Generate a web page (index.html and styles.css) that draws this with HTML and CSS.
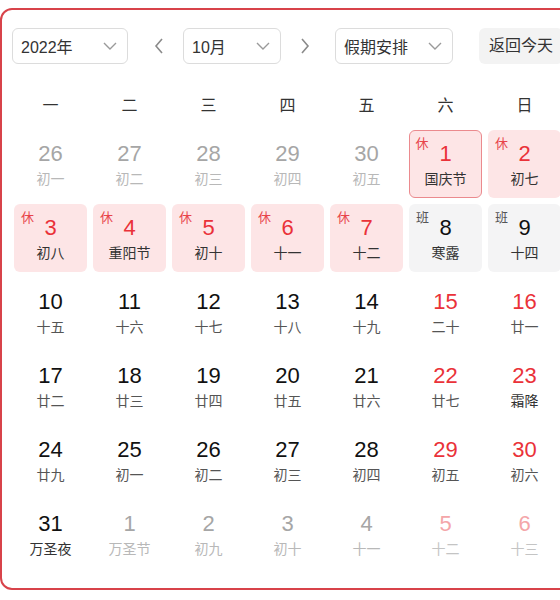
FILE: index.html
```html
<!DOCTYPE html>
<html lang="zh">
<head>
<meta charset="utf-8">
<link rel="stylesheet" href="styles.css">
</head>
<body>
<div class="cal">
  <div class="bar">
    <div class="sel sel-year"><span>2022年</span><svg class="dd" width="14" height="8" viewBox="0 0 14 8"><polyline points="1,1 7,7 13,1"/></svg></div>
    <span class="arrow arrow-l"><svg width="10" height="16" viewBox="0 0 10 16"><polyline points="8,1 2,8 8,15"/></svg></span>
    <div class="sel sel-month"><span>10月</span><svg class="dd" width="14" height="8" viewBox="0 0 14 8"><polyline points="1,1 7,7 13,1"/></svg></div>
    <span class="arrow arrow-r"><svg width="10" height="16" viewBox="0 0 10 16"><polyline points="2,1 8,8 2,15"/></svg></span>
    <div class="sel sel-hol"><span>假期安排</span><svg class="dd" width="14" height="8" viewBox="0 0 14 8"><polyline points="1,1 7,7 13,1"/></svg></div>
    <div class="today-btn">返回今天</div>
  </div>
  <div class="week">
    <span>一</span><span>二</span><span>三</span><span>四</span><span>五</span><span>六</span><span>日</span>
  </div>
  <div class="grid">
    <div class="cell other"><span class="num">26</span><span class="lunar">初一</span></div>
    <div class="cell other"><span class="num">27</span><span class="lunar">初二</span></div>
    <div class="cell other"><span class="num">28</span><span class="lunar">初三</span></div>
    <div class="cell other"><span class="num">29</span><span class="lunar">初四</span></div>
    <div class="cell other"><span class="num">30</span><span class="lunar">初五</span></div>
    <div class="cell rest today"><span class="tag">休</span><span class="num">1</span><span class="lunar">国庆节</span></div>
    <div class="cell rest"><span class="tag">休</span><span class="num">2</span><span class="lunar">初七</span></div>

    <div class="cell rest"><span class="tag">休</span><span class="num">3</span><span class="lunar">初八</span></div>
    <div class="cell rest"><span class="tag">休</span><span class="num">4</span><span class="lunar">重阳节</span></div>
    <div class="cell rest"><span class="tag">休</span><span class="num">5</span><span class="lunar">初十</span></div>
    <div class="cell rest"><span class="tag">休</span><span class="num">6</span><span class="lunar">十一</span></div>
    <div class="cell rest"><span class="tag">休</span><span class="num">7</span><span class="lunar">十二</span></div>
    <div class="cell work"><span class="tag">班</span><span class="num">8</span><span class="lunar term">寒露</span></div>
    <div class="cell work"><span class="tag">班</span><span class="num">9</span><span class="lunar">十四</span></div>

    <div class="cell"><span class="num">10</span><span class="lunar">十五</span></div>
    <div class="cell"><span class="num">11</span><span class="lunar">十六</span></div>
    <div class="cell"><span class="num">12</span><span class="lunar">十七</span></div>
    <div class="cell"><span class="num">13</span><span class="lunar">十八</span></div>
    <div class="cell"><span class="num">14</span><span class="lunar">十九</span></div>
    <div class="cell wkend"><span class="num">15</span><span class="lunar">二十</span></div>
    <div class="cell wkend"><span class="num">16</span><span class="lunar">廿一</span></div>

    <div class="cell"><span class="num">17</span><span class="lunar">廿二</span></div>
    <div class="cell"><span class="num">18</span><span class="lunar">廿三</span></div>
    <div class="cell"><span class="num">19</span><span class="lunar">廿四</span></div>
    <div class="cell"><span class="num">20</span><span class="lunar">廿五</span></div>
    <div class="cell"><span class="num">21</span><span class="lunar">廿六</span></div>
    <div class="cell wkend"><span class="num">22</span><span class="lunar">廿七</span></div>
    <div class="cell wkend"><span class="num">23</span><span class="lunar term">霜降</span></div>

    <div class="cell"><span class="num">24</span><span class="lunar">廿九</span></div>
    <div class="cell"><span class="num">25</span><span class="lunar">初一</span></div>
    <div class="cell"><span class="num">26</span><span class="lunar">初二</span></div>
    <div class="cell"><span class="num">27</span><span class="lunar">初三</span></div>
    <div class="cell"><span class="num">28</span><span class="lunar">初四</span></div>
    <div class="cell wkend"><span class="num">29</span><span class="lunar">初五</span></div>
    <div class="cell wkend"><span class="num">30</span><span class="lunar">初六</span></div>

    <div class="cell"><span class="num">31</span><span class="lunar term">万圣夜</span></div>
    <div class="cell other"><span class="num">1</span><span class="lunar">万圣节</span></div>
    <div class="cell other"><span class="num">2</span><span class="lunar">初九</span></div>
    <div class="cell other"><span class="num">3</span><span class="lunar">初十</span></div>
    <div class="cell other"><span class="num">4</span><span class="lunar">十一</span></div>
    <div class="cell other wkend"><span class="num">5</span><span class="lunar">十二</span></div>
    <div class="cell other wkend"><span class="num">6</span><span class="lunar">十三</span></div>
  </div>
</div>
</body>
</html>
```

FILE: styles.css
```css
html {
  overflow: hidden;
}
body {
  margin: 0;
  background: #fff;
  font-family: "Liberation Sans", "Noto Sans CJK SC", sans-serif;
  color: #333;
}
.cal {
  box-sizing: border-box;
  width: 575px;
  margin-top: 8px;
  border: 2px solid #d8434a;
  border-radius: 12px;
  padding: 18px 12px 20px;
}
.bar {
  display: flex;
  align-items: center;
  height: 36px;
  margin-left: -2px;
  white-space: nowrap;
}
.sel {
  box-sizing: border-box;
  height: 36px;
  border: 1px solid #dcdcdc;
  border-radius: 6px;
  display: flex;
  align-items: center;
  justify-content: space-between;
  padding: 0 10px 0 8px;
  font-size: 16px;
  color: #333;
  flex: none;
}
.sel-year { width: 116px; }
.sel-month { width: 98px; }
.sel-hol { width: 118px; }
.dd polyline {
  fill: none;
  stroke: #9a9a9a;
  stroke-width: 1.4;
}
.arrow {
  display: flex;
  align-items: center;
  width: 10px;
  height: 36px;
  flex: none;
}
.arrow polyline {
  fill: none;
  stroke: #8a8a8a;
  stroke-width: 1.6;
}
.arrow-l { margin: 0 19px 0 26px; }
.arrow-r { margin: 0 25px 0 19px; }
.today-btn {
  margin-left: 26px;
  height: 36px;
  line-height: 36px;
  padding: 0 10px;
  background: #f3f3f3;
  border-radius: 6px;
  font-size: 16px;
  color: #333;
  flex: none;
}
.week {
  display: grid;
  grid-template-columns: repeat(7, 73px);
  column-gap: 6px;
  margin-top: 20px;
  margin-bottom: 6px;
  height: 40px;
  align-items: center;
  text-align: center;
  font-size: 16px;
  color: #333;
}
.grid {
  display: grid;
  grid-template-columns: repeat(7, 73px);
  grid-auto-rows: 68px;
  gap: 6px;
}
.cell {
  position: relative;
  box-sizing: border-box;
  border-radius: 6px;
  display: flex;
  flex-direction: column;
  align-items: center;
  padding-top: 12px;
}
.num {
  font-size: 22px;
  line-height: 24px;
  color: #111;
}
.lunar {
  margin-top: 4px;
  font-size: 14px;
  line-height: 18px;
  color: #555;
}
.lunar.term { color: #333; }
.tag {
  position: absolute;
  left: 7px;
  top: 6px;
  font-size: 13px;
  line-height: 16px;
}
.rest { background: #fde5e6; }
.rest .num { color: #ea3239; }
.rest .lunar { color: #333; }
.rest .tag { color: #e8444a; }
.today { border: 1.5px solid #eb8a8e; padding-top: 10.5px; }
.today .tag { left: 5.5px; top: 4.5px; }
.work { background: #f4f4f5; }
.work .tag { color: #555; }
.work .lunar { color: #333; }
.wkend .num { color: #ea3239; }
.other .num { color: #a6a6a6; }
.other .lunar { color: #b8b8b8; }
.other.wkend .num { color: #f4a6a9; }
.other.wkend .lunar { color: #c4c4c4; }
```
